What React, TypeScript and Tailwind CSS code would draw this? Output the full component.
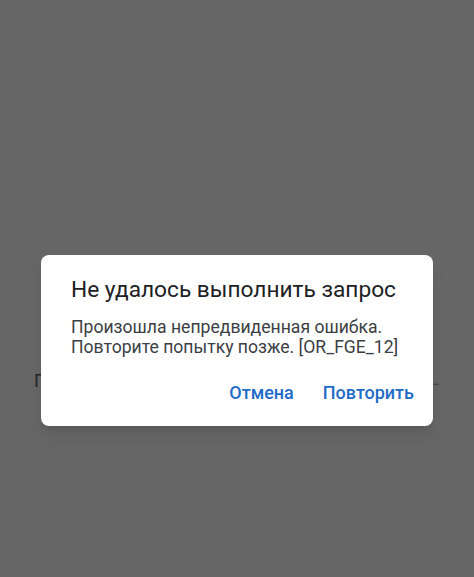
export default function App() {
  return (
    <div
      className="relative h-[577px] w-full overflow-hidden bg-[#666666]"
      style={{ fontFamily: "Roboto, 'Noto Sans', sans-serif" }}
    >
      {/* page behind the scrim */}
      <div className="flex items-end justify-between pt-[371px] pl-[34px] pr-[35px] text-[18px] leading-[20px] text-[#262626]">
        <span>П</span>
        <span className="text-[12px]">…</span>
      </div>

      {/* dialog */}
      <div className="absolute left-[41px] top-[255px] w-[392px] h-[171px] rounded-lg bg-white shadow-lg">
        <div className="flex h-full flex-col px-[30px] pt-[21px]">
          <h2 className="text-[22.7px] leading-[28px] text-[#202124]">
            Не удалось выполнить запрос
          </h2>
          <p className="mt-[13px] text-[17.6px] leading-[20px] text-[#3c4043]">
            Произошла непредвиденная ошибка.
            <br />
            Повторите попытку позже. [OR_FGE_12]
          </p>
          <div className="mt-auto mb-[18px] -mr-[19px] flex justify-end gap-[13px]">
            <button className="px-2 py-1 text-[18px] font-medium leading-[22px] text-[#1f6bc8]">
              Отмена
            </button>
            <button className="px-2 py-1 text-[18px] font-medium leading-[22px] text-[#1f6bc8]">
              Повторить
            </button>
          </div>
        </div>
      </div>
    </div>
  );
}
